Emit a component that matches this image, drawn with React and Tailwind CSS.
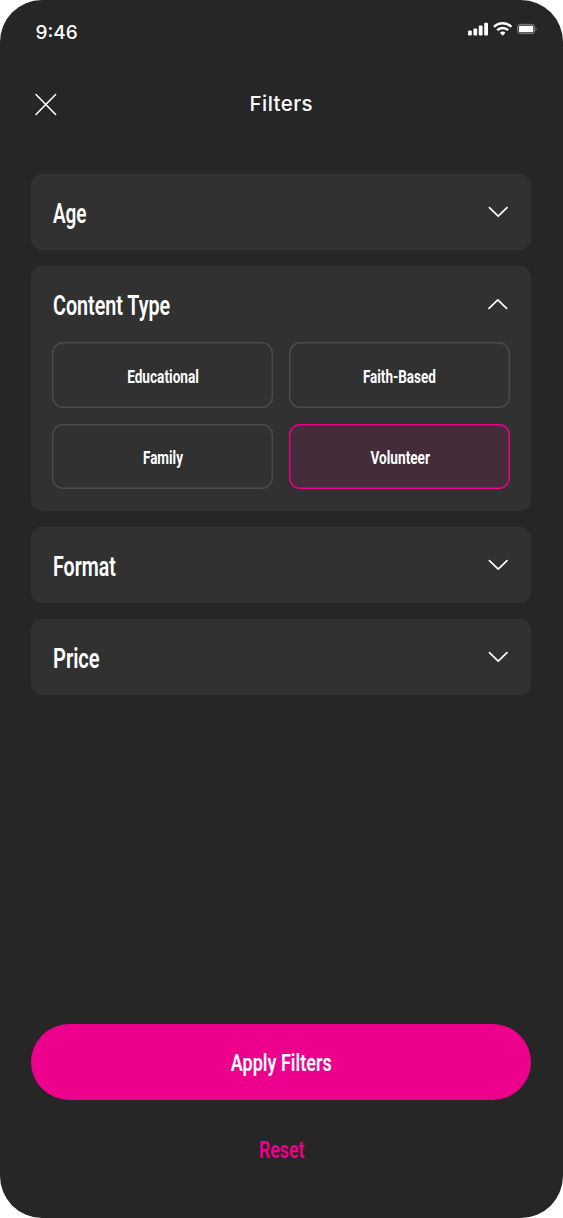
import React, { useState } from 'react';

const SECTIONS = [
  { id: 'age', label: 'Age', labelScale: 'scale-x-[0.7]', options: [] },
  {
    id: 'content',
    label: 'Content Type',
    labelScale: 'scale-x-[0.73]',
    options: [
      { name: 'Educational', scale: 'scale-x-[0.78]' },
      { name: 'Faith-Based', scale: 'scale-x-[0.77]' },
      { name: 'Family', scale: 'scale-x-[0.77]' },
      { name: 'Volunteer', scale: 'scale-x-[0.78]' }
    ]
  },
  { id: 'format', label: 'Format', labelScale: 'scale-x-[0.725]', options: [] },
  { id: 'price', label: 'Price', labelScale: 'scale-x-[0.745]', options: [] }
];

const StatusBar = () => (
  <div className="flex h-[65px] items-start justify-between pl-[35.5px] pr-[26px] pt-[21px]">
    <span className="font-[Inter,sans-serif] text-[19px] leading-6 font-medium">9:46</span>
    <div className="flex items-center pt-px">
      <svg width="69" height="16" viewBox="0 0 69 16" fill="currentColor">
        <rect x="0" y="8.6" width="3.8" height="4.9" rx="1" />
        <rect x="5.4" y="6.4" width="3.8" height="7.1" rx="1" />
        <rect x="10.8" y="3.6" width="3.8" height="9.9" rx="1" />
        <rect x="16.2" y="0.8" width="3.8" height="12.7" rx="1" />
        <g fill="none" stroke="currentColor" strokeWidth="2.5">
          <path d="M26 4.9a12.3 12.3 0 0 1 17.4 0" />
          <path d="M29.2 8.2a7.8 7.8 0 0 1 11 0" />
        </g>
        <path d="M31.9 10.8a4 4 0 0 1 5.6 0L34.7 13.7z" />
        <rect x="49.6" y="2.4" width="17" height="9.2" rx="2.6" fill="none" stroke="currentColor" strokeOpacity="0.4" />
        <rect x="50.9" y="3.8" width="14.4" height="6.4" rx="1.3" />
        <path d="M67.7 5.5v3a1.7 1.7 0 0 0 0-3z" opacity="0.45" />
      </svg>
    </div>
  </div>
);

const Chevron = ({ open }) => (
  <svg
    className={open ? 'rotate-180' : ''}
    width="20"
    height="12"
    viewBox="0 0 20 12"
    fill="none"
    stroke="currentColor"
    strokeWidth="1.7"
    strokeLinecap="round"
    strokeLinejoin="round"
  >
    <path d="M1.4 1.6 10.2 10.1l8.8-8.5" />
  </svg>
);

const App = () => {
  const [openSection, setOpenSection] = useState('content');
  const [selected, setSelected] = useState('Volunteer');

  return (
    <div className="min-h-[1218px] bg-white">
      <div className="flex h-[1218px] w-[562.5px] flex-col rounded-[42px] bg-[#262626] text-white">
        <StatusBar />

        <header className="grid h-[78px] grid-cols-[40px_1fr_40px] items-center px-[31px]">
          <button className="pl-[3px]" aria-label="Close" onClick={() => setOpenSection(null)}>
            <svg width="23" height="23" viewBox="0 0 23 23" fill="none" stroke="currentColor" strokeWidth="1.6" strokeLinecap="round">
              <path d="M2 1.5l19.6 20M21.6 1.5L2 21.5" />
            </svg>
          </button>
          <h1 className="text-center font-[Inter,sans-serif] text-[20.5px] font-medium tracking-[0.02em]">Filters</h1>
        </header>

        <main className="mt-[31px] flex flex-col gap-4 px-[31.25px] font-[Roboto,sans-serif]">
          {SECTIONS.map(section => {
            const open = openSection === section.id;
            return (
              <section key={section.id} className="rounded-[11px] bg-[#313131] px-[21px]">
                <button
                  className="flex h-[76px] w-full items-center justify-between pr-[2px] pl-[0.5px]"
                  onClick={() => setOpenSection(open ? null : section.id)}
                >
                  <span className={`origin-left pt-[4px] text-[27px] leading-8 font-semibold ${section.labelScale}`}>
                    {section.label}
                  </span>
                  <Chevron open={open} />
                </button>

                {open && section.options.length > 0 && (
                  <div className="grid grid-cols-2 gap-4 pb-[22px]">
                    {section.options.map(option => (
                      <button
                        key={option.name}
                        onClick={() => setSelected(option.name)}
                        className={`flex h-[65.5px] items-center justify-center rounded-[11px] inset-ring-[1.4px] ${
                          selected === option.name ? 'bg-[#442c3a] inset-ring-[#ec008c]' : 'inset-ring-[#4c4c4c]'
                        }`}
                      >
                        <span className={`pt-[4px] text-[17.5px] leading-6 font-bold ${option.scale}`}>{option.name}</span>
                      </button>
                    ))}
                  </div>
                )}
              </section>
            );
          })}
        </main>

        <footer className="mt-auto flex flex-col items-center px-[31.25px] pb-[48px] font-[Roboto,sans-serif]">
          <button className="flex h-[76px] w-full items-center justify-center rounded-full bg-[#ec008c]">
            <span className="scale-x-[0.75] pt-[2px] text-[24px] leading-8 font-semibold">Apply Filters</span>
          </button>
          <button className="mt-[30px] h-10 text-[#ec008c]" onClick={() => setSelected(null)}>
            <span className="inline-block scale-x-[0.74] text-[24px] leading-10 font-semibold">Reset</span>
          </button>
        </footer>
      </div>
    </div>
  );
};

export default App;
